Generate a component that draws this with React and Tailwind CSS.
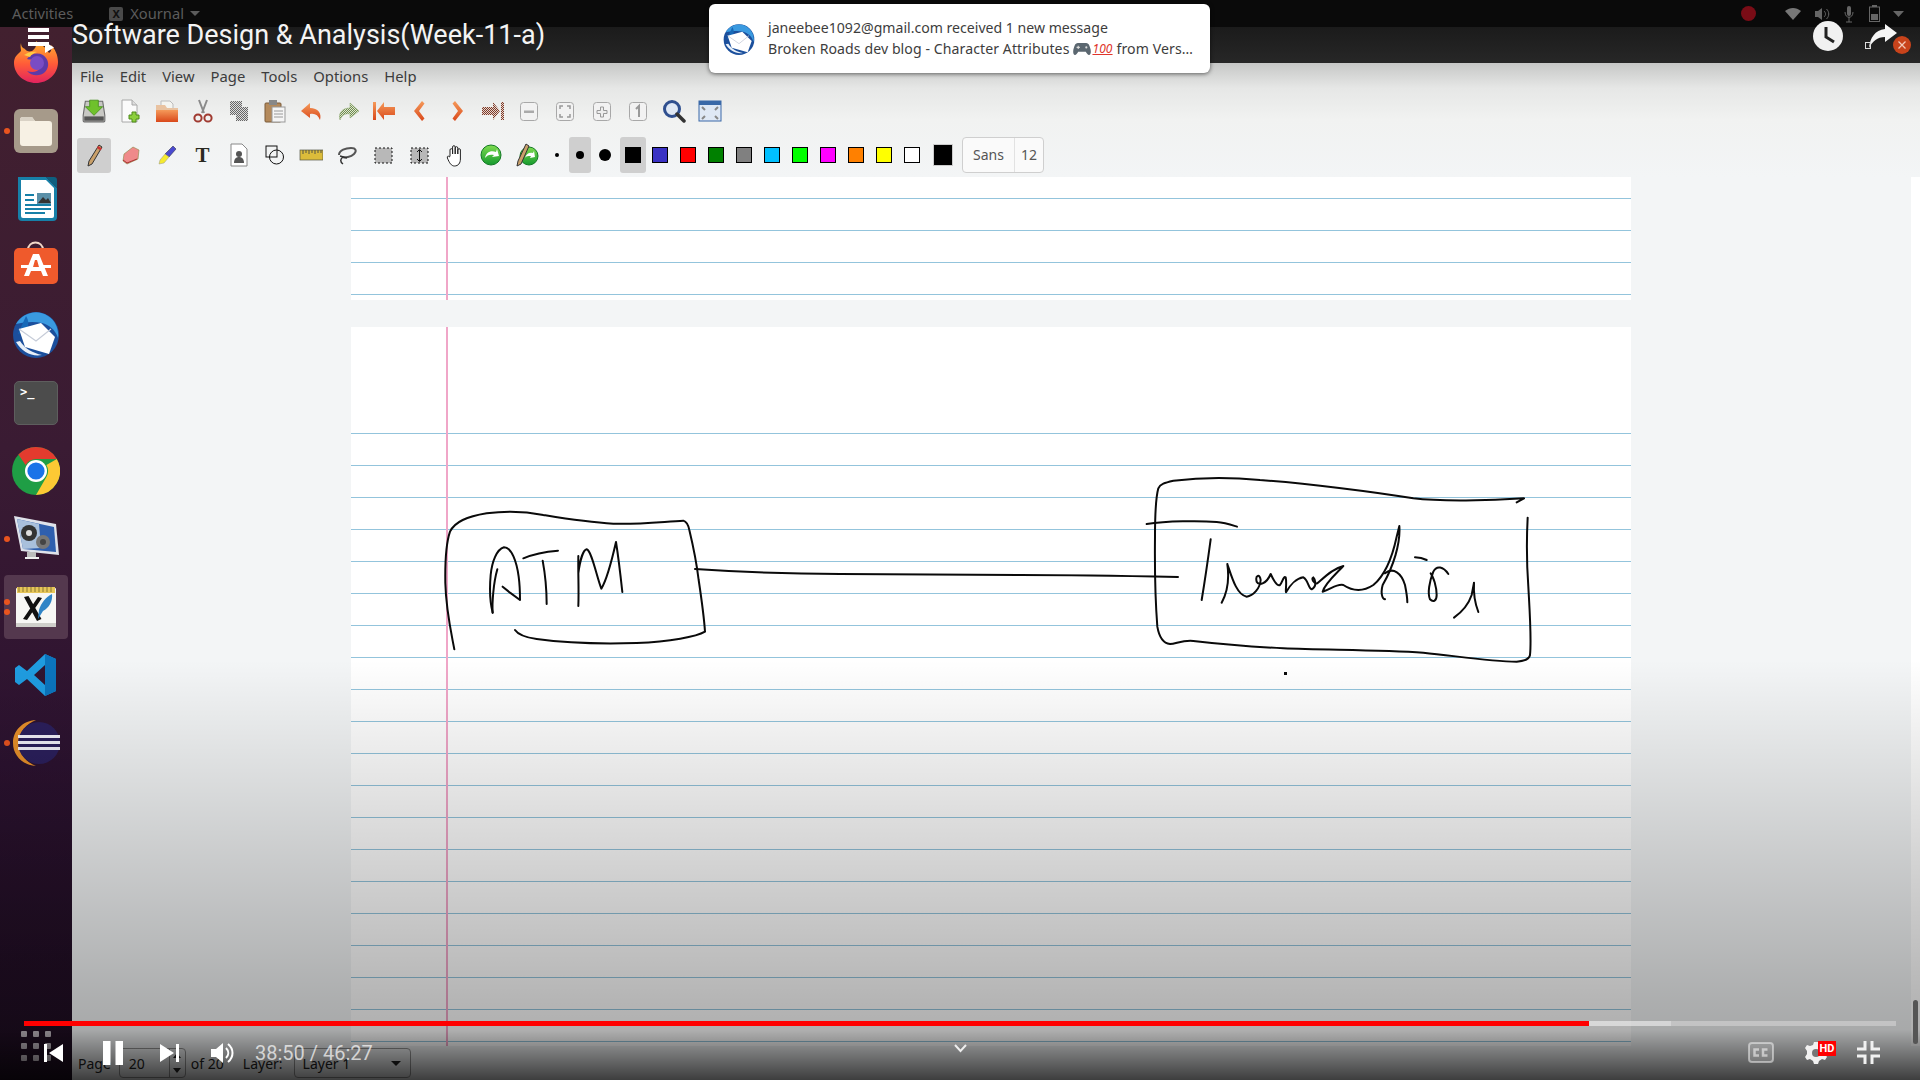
const UI = { fontFamily: '"Noto Sans","Open Sans",sans-serif' };

const Ic = ({ s = 24, vb = 24, children, className = '' }) => (
  <svg width={s} height={s} viewBox={`0 0 ${vb} ${vb}`} className={`shrink-0 ${className}`}>{children}</svg>
);

/* ---------- dock ---------- */
const Firefox = () => (
  <Ic s={46} vb={46} className="-mt-[6px]">
    <defs>
      <linearGradient id="ff" x1="0" y1="0" x2="0" y2="1"><stop offset="0" stopColor="#ffb52e" /><stop offset=".55" stopColor="#ff5b38" /><stop offset="1" stopColor="#e2235f" /></linearGradient>
    </defs>
    <path d="M8 6c-1 3 0 6 0 8C4 18 1 20 1 26c0 11 10 20 22 20s22-9 22-21c0-7-3-13-7-17 1 4 0 7-2 8-3-6-9-9-13-12 1 5-1 8-4 10-3 1-6 0-7-2-3-1-4-3-4-6z" fill="url(#ff)" />
    <path d="M14 22c3-5 10-7 16-4 6 4 7 12 2 17-5 5-14 4-18-1 5 2 11 1 13-3 2-3 0-7-4-8-3-1-7 0-9-1z" fill="#5e3aa8" />
    <circle cx="24" cy="26" r="7" fill="#7a4cc4" />
    <path d="M11 18c4-3 9-4 13-3-4 1-6 3-7 5z" fill="#ffcb45" />
  </Ic>
);
const Files = () => (
  <div className="w-[44px] h-[44px] rounded-[6px] bg-[#a69a8a] flex items-center justify-center">
    <svg width="34" height="30" viewBox="0 0 34 30"><path d="M1 4a3 3 0 013-3h9l3 4h14a3 3 0 013 3v19a3 3 0 01-3 3H4a3 3 0 01-3-3z" fill="#f7f1e4" /><path d="M1 4a3 3 0 013-3h9l3 4H1z" fill="#d9d2c5" /></svg>
  </div>
);
const Writer = () => (
  <Ic s={46} vb={46}>
    <path d="M5 1h28l11 11v29a4 4 0 01-4 4H9a4 4 0 01-4-4z" fill="#1780a8" />
    <path d="M33 1h8a3 3 0 013 3v8z" fill="#0e5f80" />
    <path d="M8 4h25l8 8v28a2 2 0 01-2 2H10a2 2 0 01-2-2z" fill="#fff" />
    <rect x="24" y="17" width="14" height="11" fill="#5b90a8" /><path d="M25 27l5-6 3 3 2-2 3 5z" fill="#333" />
    <g fill="#1780a8"><rect x="12" y="18" width="9" height="2" /><rect x="12" y="23" width="9" height="2" /><rect x="12" y="28" width="26" height="2" /><rect x="12" y="32" width="26" height="2" /><rect x="12" y="36" width="20" height="2" /></g>
  </Ic>
);
const Store = () => (
  <Ic s={46} vb={46} className="-mt-[8px]">
    <path d="M15 10c0-10 15-10 15 0" fill="none" stroke="#f2d8c8" strokeWidth="2" />
    <rect x="1" y="8" width="44" height="36" rx="5" fill="#ef5a2c" />
    <path d="M20 14h6l9 22h-5l-2-5H18l-2 5h-5z" fill="#fff" />
    <rect x="8" y="25" width="30" height="3" fill="#fff" />
    <path d="M22 20h2l2 7h-6z" fill="#ef5a2c" />
  </Ic>
);
const Thunderbird = ({ s = 48, className = '' }) => (
  <Ic s={s} vb={48} className={className}>
    <circle cx="24" cy="25" r="23" fill="#1b4f9c" />
    <path d="M4 14C10 4 24-2 36 6c8 5 11 14 10 22-3-9-9-13-16-15-8-2-18-1-26 1z" fill="#3a9ae0" />
    <path d="M14 6c3 5 3 9 0 14l-8 4z" fill="#1769b8" />
    <path d="M7 19l22-6 14 14-6 17-24-7z" fill="#fff" />
    <path d="M7 19l17 12 15-12" fill="none" stroke="#c6ccd8" strokeWidth="1.2" />
    <path d="M4 32c6 10 16 15 26 13-9-2-17-6-22-14z" fill="#e8f0f8" />
  </Ic>
);
const Terminal = () => (
  <div className="w-[44px] h-[44px] rounded-[5px] bg-[#4c4c4c] border border-[#5e5e5e] relative -mt-[1px]">
    <span className="absolute left-[5px] top-[1px] text-[12px] text-white font-bold" style={{ fontFamily: '"DejaVu Sans Mono",monospace' }}>&gt;_</span>
  </div>
);
const Chrome = () => (
  <Ic s={48} vb={48}>
    <circle cx="24" cy="24" r="24" fill="#1f9e45" />
    <path d="M24 0a24 24 0 0120.8 12H24a12 12 0 00-10.4 6L6.4 7.6A24 24 0 0124 0z" fill="#e33b2e" />
    <path d="M44.8 12A24 24 0 0124 48l10.4-18a12 12 0 000-12z" fill="#fcc934" />
    <circle cx="24" cy="24" r="11" fill="#fff" /><circle cx="24" cy="24" r="8.6" fill="#1a73e8" />
  </Ic>
);
const VideoIcon = () => (
  <Ic s={48} vb={48}>
    <path d="M2 1l42 8 3 31-38-4z" fill="#dfe2ea" />
    <path d="M5 4l37 8 2 25-33-3z" fill="#2f5fae" />
    <path d="M5 4l22 5 2 24-18 1z" fill="#a9c0dc" />
    <circle cx="17" cy="18" r="8" fill="#333" /><circle cx="17" cy="18" r="3" fill="#ddd" />
    <circle cx="31" cy="27" r="7" fill="#777" /><circle cx="31" cy="27" r="3" fill="#444" />
    <rect x="15" y="37" width="9" height="5" fill="#bbb" /><rect x="13" y="42" width="14" height="2" fill="#eee" />
  </Ic>
);
const XournalTile = () => (
  <div className="w-[64px] h-[64px] rounded-[4px] bg-[#54384e] flex items-center justify-center">
    <svg width="40" height="42" viewBox="0 0 40 42">
      <rect x="0" y="2" width="40" height="39" rx="1" fill="#f7f7f4" />
      <rect x="1" y="1" width="38" height="6" fill="#e6c65a" />
      <path d="M3 1v5M7 1v5M11 1v5M15 1v5M19 1v5M23 1v5M27 1v5M31 1v5M35 1v5" stroke="#8a7a30" />
      <rect x="0" y="37" width="40" height="4" fill="#cfcfca" />
      <path d="M8 11l4.500-1 13 23-4.500 2zM22 11l4 1-15 22-4-1z" fill="#111" />
      <path d="M36 8c1 7-3 14-9 17l-5 8 1-9c2-7 7-13 13-16z" fill="#2f84c6" />
    </svg>
  </div>
);
const VSCode = () => (
  <Ic s={44} vb={44}>
    <path d="M31 1l11 5v32l-11 5-18-17-8 6-4-3v-14l4-3 8 6zM31 12l-11 10 11 10z" fill="#1f9ce0" fillRule="evenodd" />
    <path d="M31 1l11 5v32l-11 5z" fill="#0b74bd" />
  </Ic>
);
const Eclipse = () => (
  <Ic s={48} vb={48}>
    <path d="M24 1C10 2 1 12 1 24s9 22 23 23C14 43 7 35 7 24S14 5 24 1z" fill="#e8902a" />
    <circle cx="27" cy="24" r="21" fill="#2b1f5c" />
    <g fill="#f2f0fa"><rect x="6" y="16" width="42" height="3" /><rect x="6" y="22" width="42" height="3" /><rect x="6" y="28" width="42" height="3" /></g>
  </Ic>
);

const dockItems = [
  { c: <Firefox /> }, { c: <Files />, dots: [0] }, { c: <Writer /> }, { c: <Store /> },
  { c: <Thunderbird className="-mt-[3px]" /> }, { c: <Terminal /> }, { c: <Chrome /> }, { c: <VideoIcon />, dots: [0] },
  { c: <XournalTile />, dots: [-5, 5] }, { c: <VSCode /> }, { c: <Eclipse />, dots: [0] },
];

const Dock = () => (
  <aside className="relative w-[72px] shrink-0 flex flex-col pt-[2px] bg-[linear-gradient(to_bottom,#42202f_0%,#3a1b33_40%,#2c1230_70%,#1d0d20_100%)]">
    {dockItems.map((it, i) => (
      <div key={i} className="relative h-[68px] shrink-0 flex items-center justify-center">
        {it.c}
        {(it.dots || []).map((d, j) => (
          <span key={j} className="absolute left-[4px] top-1/2 w-[6px] h-[6px] -mt-[3px] rounded-full bg-[#e9541f]" style={{ transform: `translateY(${d}px)` }} />
        ))}
      </div>
    ))}
    <div className="absolute left-[21px] bottom-[19px] grid grid-cols-3 gap-x-[6px] gap-y-[6px]">
      {Array.from({ length: 9 }).map((_, i) => <span key={i} className="w-[6px] h-[6px] rounded-[1px] bg-[#c4bcc4]" />)}
    </div>
    <div className="absolute left-[28px] top-[1px] flex flex-col gap-[3px]">
      <span className="w-[21px] h-[4px] bg-white" /><span className="w-[21px] h-[4px] bg-white" /><span className="w-[21px] h-[4px] bg-white" />
    </div>
    <svg className="absolute left-[45px] top-[15px]" width="9" height="11" viewBox="0 0 9 11"><path d="M0 0l9 5.500L0 11z" fill="#fff" /></svg>
  </aside>
);

/* ---------- toolbar icons ---------- */
const Chk = 'url(#chk)';
const Defs = () => (
  <svg width="0" height="0" className="absolute">
    <defs>
      <pattern id="chk" width="2" height="2" patternUnits="userSpaceOnUse"><rect width="2" height="2" fill="#ddd" /><rect width="1" height="1" fill="#666" /><rect x="1" y="1" width="1" height="1" fill="#666" /></pattern>
      <pattern id="chkO" width="2" height="2" patternUnits="userSpaceOnUse"><rect width="2" height="2" fill="#e5d7d0" /><rect width="1" height="1" fill="#7f3a28" /><rect x="1" y="1" width="1" height="1" fill="#7f3a28" /></pattern>
      <pattern id="chkG" width="2" height="2" patternUnits="userSpaceOnUse"><rect width="2" height="2" fill="#dfe8d0" /><rect width="1" height="1" fill="#6f8a50" /><rect x="1" y="1" width="1" height="1" fill="#6f8a50" /></pattern>
      <linearGradient id="org" x1="0" y1="0" x2="0" y2="1"><stop offset="0" stopColor="#f59a5a" /><stop offset="1" stopColor="#d9481a" /></linearGradient>
      <linearGradient id="grn" x1="0" y1="0" x2="0" y2="1"><stop offset="0" stopColor="#7fdc4f" /><stop offset="1" stopColor="#149a2e" /></linearGradient>
    </defs>
  </svg>
);
const ZoomBtn = ({ children }) => (
  <Ic>
    <rect x="3.5" y="3.5" width="17" height="18" rx="3" fill="#f2f2f2" stroke="#a8a8a8" />
    {children}
  </Ic>
);
const rowA = [
  <Ic s={26}><path d="M2 16l2-13h16l2 13v5a1 1 0 01-1 1H3a1 1 0 01-1-1z" fill="#c8c8c4" stroke="#6a6a6a" /><rect x="3" y="17" width="18" height="4" fill="#555" /><path d="M8 2h8v6h4l-8 8-8-8h4z" fill="#6fc12c" stroke="#3f8a14" strokeWidth=".7" /></Ic>,
  <Ic><path d="M4 1h10l5 5v17H4z" fill="#fbfbfb" stroke="#a8a8a8" /><path d="M14 1v5h5" fill="#ddd" stroke="#a8a8a8" /><path d="M14 13h4v3h3v4h-3v3h-4v-3h-3v-4h3z" fill="#8ccf3c" stroke="#4f8a1a" /></Ic>,
  <Ic><path d="M6 2h9l3 3v6H6z" fill="#f4f4f0" stroke="#bbb" /><path d="M1 6h9l2 3h11v14H1z" fill="#e9c2a0" /><path d="M1 11h22v12H1z" fill="url(#org)" /></Ic>,
  <Ic><path d="M8 1l5 13M16 1l-5 13" stroke="#8a8a8a" strokeWidth="2" /><circle cx="7" cy="19" r="3.6" fill="none" stroke="#a03a30" strokeWidth="2" /><circle cx="17" cy="19" r="3.6" fill="none" stroke="#a03a30" strokeWidth="2" /></Ic>,
  <Ic><rect x="3" y="2" width="12" height="14" fill={Chk} /><rect x="9" y="8" width="12" height="14" fill={Chk} /></Ic>,
  <Ic><rect x="2" y="4" width="16" height="19" rx="1" fill="#b48a5c" stroke="#7a5a38" /><rect x="6" y="1" width="8" height="5" fill="#888" /><rect x="9" y="8" width="13" height="15" fill="#f5f5f5" stroke="#999" /><path d="M11 12h9M11 15h9M11 18h9" stroke="#999" /></Ic>,
  <Ic><path d="M10 4L1 12l9 7v-4c5-1 8 1 10 6 2-7-2-12-10-12z" fill="url(#org)" /></Ic>,
  <Ic><path d="M14 4l9 8-9 7v-4c-5-1-8 1-10 6-2-7 2-12 10-12z" fill="url(#chkG)" stroke="#88a468" strokeWidth=".5" /></Ic>,
  <Ic><rect x="1" y="3" width="3" height="18" fill="url(#org)" /><path d="M12 3L5 12l7 9v-5h11V8H12z" fill="url(#org)" /></Ic>,
  <Ic><path d="M14 2L6 12l8 10 2.5-2.5L11 12l5.500-7.500z" fill="url(#org)" /></Ic>,
  <Ic><path d="M10 2l8 10-8 10-2.500-2.500L13 12 7.500 4.500z" fill="url(#org)" /></Ic>,
  <Ic><rect x="20" y="3" width="3" height="18" fill="url(#chkO)" /><path d="M12 3l7 9-7 9v-5H1V8h11z" fill="url(#chkO)" /></Ic>,
  <ZoomBtn><rect x="7" y="11.500" width="10" height="2.500" fill="#aaa" /></ZoomBtn>,
  <ZoomBtn><path d="M7 10V7h3M14 7h3v3M7 15v3h3M14 18h3v-3" fill="none" stroke="#999" strokeWidth="1.500" /></ZoomBtn>,
  <ZoomBtn><path d="M10.500 8h3v3.500H17v3h-3.500V18h-3v-3.500H7v-3h3.500z" fill="#eee" stroke="#999" /></ZoomBtn>,
  <ZoomBtn><path d="M10 10l3-3v11" fill="none" stroke="#999" strokeWidth="2" /></ZoomBtn>,
  <Ic><circle cx="10" cy="10" r="7.500" fill="#dfe8f5" stroke="#2f4f8f" strokeWidth="3" /><path d="M15 15l7 7" stroke="#333" strokeWidth="3.500" strokeLinecap="round" /></Ic>,
  <Ic><rect x="1" y="2" width="22" height="20" fill="#dfe8f5" stroke="#3a69a8" /><rect x="1" y="2" width="22" height="4" fill="#3a69a8" /><path d="M4 8l3 3M20 8l-3 3M4 20l3-3M20 20l-3-3" stroke="#888" strokeWidth="2" /></Ic>,
];

const rowB = [
  <Ic><path d="M17 2l3 2-10 17-4 2 1-5z" fill="#c9a06a" stroke="#333" /><path d="M16 3l4 2.500-1.500 2-3.500-2.500z" fill="#c33" /></Ic>,
  <Ic><path d="M5 11L14 4l6 3-1 9-11 5-4-3z" fill="#ef8a8a" stroke="#884" strokeWidth=".6" /><path d="M4 17l4 3 10-4" fill="none" stroke="#a33" /></Ic>,
  <Ic><path d="M18 3l3 3-7 8-4-3z" fill="#4a4ad0" stroke="#223" strokeWidth=".5" /><path d="M10 11l4 3-5 6-5 1 1-4z" fill="#f5ea30" stroke="#998" strokeWidth=".5" /></Ic>,
  <span className="text-[#2a2a22] text-[21px] font-bold leading-none" style={{ fontFamily: '"Liberation Serif",serif' }}>T</span>,
  <Ic><path d="M4 1h11l5 5v17H4z" fill="#fff" stroke="#888" /><circle cx="12" cy="11" r="3" fill="#555" /><path d="M7 20c0-4 2-6 5-6s5 2 5 6z" fill="#555" /></Ic>,
  <Ic><rect x="3" y="3" width="11" height="11" fill="none" stroke="#111" /><circle cx="13.500" cy="14" r="7" fill="none" stroke="#111" /></Ic>,
  <Ic><rect x="1" y="7" width="23" height="10" fill="#dcbc3a" stroke="#554" strokeWidth=".7" /><path d="M4 7v4M7 7v3M10 7v4M13 7v3M16 7v4M19 7v3M22 7v3" stroke="#554" /></Ic>,
  <Ic><path d="M4 12c0-5 7-7 12-7s6 3 3 6-9 4-12 3" fill="none" stroke="#555" strokeWidth="2" /><path d="M8 14c-3 2-3 5 0 7M5 13l7 2" fill="none" stroke="#333" strokeWidth="1.500" /></Ic>,
  <Ic><rect x="4" y="5" width="17" height="15" fill="#b8b8b8" stroke="#111" strokeDasharray="2 2" /></Ic>,
  <Ic><rect x="4" y="5" width="17" height="15" fill="#b8b8b8" stroke="#111" strokeDasharray="2 2" /><path d="M12.500 7v11M10 9l2.500-2.500L15 9M10 16l2.500 2.500L15 16" fill="none" stroke="#111" /></Ic>,
  <Ic><path d="M7 13V7a1.300 1.300 0 012.600 0v4-7a1.300 1.300 0 012.600 0v7-6a1.300 1.300 0 012.600 0v6-4a1.300 1.300 0 012.600 0v9c0 4-2 7-6 7-3 0-5-3-7-8-.5-2 1-2.500 2-1z" fill="#fff" stroke="#222" strokeWidth="1" /></Ic>,
  <Ic><circle cx="12" cy="12" r="10" fill="url(#grn)" stroke="#137a24" /><path d="M6 15c1-5 5-8 11-6l1-3 2 7-7 1 2-2c-4-1-7 0-9 3z" fill="#fff" /></Ic>,
  <Ic><circle cx="14" cy="13" r="9" fill="url(#grn)" stroke="#137a24" /><path d="M10 15c1-4 4-6 8-5l1-2 1 6-5 1 1-2c-3 0-5 0-6 2z" fill="#fff" /><path d="M11 1l3 2L6 21l-4 2 1-5z" fill="#c9a06a" stroke="#333" /></Ic>,
];
const colors = ['#3a32c4', '#ff0000', '#008000', '#808080', '#00c0ff', '#00ff00', '#ff00ff', '#ff8000', '#ffff00', '#ffffff'];

const Toolbars = () => (
  <div className="shrink-0 bg-[linear-gradient(to_bottom,#c6c7c6_0%,#e6e7e6_22%,#f1f2f1_50%,#f3f5f6_100%)] text-[#3c3c3c]" style={UI}>
    <nav className="h-[26px] flex items-center gap-[16px] pl-[8px] text-[14.800px]">
      {['File', 'Edit', 'View', 'Page', 'Tools', 'Options', 'Help'].map((m) => <span key={m}>{m}</span>)}
    </nav>
    <div className="h-[44px] flex items-center pl-[10px] gap-[12.250px]">
      {rowA.map((c, i) => <span key={i} className="w-[24px] h-[26px] flex items-center justify-center">{c}</span>)}
    </div>
    <div className="h-[44px] flex items-center pl-[5px]">
      <div className="flex items-center gap-[1px]">
        {rowB.map((c, i) => (
          <span key={i} className={`h-[35px] flex items-center justify-center ${i === 0 ? 'w-[34px] rounded-[3px] bg-[#cfcfcf] mr-[1px]' : 'w-[35px]'}`}>{c}</span>
        ))}
      </div>
      <span className="w-[24px] h-[35px] ml-[1px] flex items-center justify-center"><span className="w-[4px] h-[4px] rounded-full bg-black" /></span>
      <span className="w-[22px] h-[36px] rounded-[3px] bg-[#cfcfcf] flex items-center justify-center"><span className="w-[8px] h-[8px] rounded-full bg-black" /></span>
      <span className="w-[24px] h-[35px] ml-[2px] flex items-center justify-center"><span className="w-[12px] h-[12px] rounded-full bg-black" /></span>
      <span className="w-[26px] h-[36px] ml-[3px] rounded-[3px] bg-[#cfcfcf] flex items-center justify-center"><span className="w-[16px] h-[16px] bg-black" /></span>
      <div className="flex items-center gap-[12px] ml-[6px]">
        {colors.map((c) => <span key={c} className="w-[16px] h-[16px] border border-black" style={{ background: c }} />)}
      </div>
      <span className="w-[20px] h-[22px] ml-[13px] bg-black border border-[#ccc]" />
      <div className="ml-[9px] w-[82px] h-[36px] rounded-[4px] border border-[#cfcfcf] bg-[#fafafa] flex items-center text-[14px] text-[#555] -mt-[1px]">
        <span className="flex-1 text-center">Sans</span>
        <span className="w-[29px] h-full border-l border-[#e2e2e2] flex items-center justify-center">12</span>
      </div>
    </div>
  </div>
);

/* ---------- pages ---------- */
const Rule = ({ n }) => Array.from({ length: n }).map((_, i) => (
  <div key={i} className="h-[32px] shrink-0 border-b-[1.500px] border-[#93c4dc]" />
));

const Ink = () => (
  <svg className="absolute left-0 top-0" width="1280" height="719" viewBox="351 327 1280 719" fill="none" stroke="#0a0a0a" strokeLinecap="round" strokeLinejoin="round">
    <g transform="translate(430 490) scale(.33333)" strokeWidth="6">
      <path d="M73 478C62 420 48 360 46 280C45 220 48 160 60 125C75 95 110 80 170 70C230 62 290 65 340 75C400 85 470 97 550 101C620 104 700 95 760 92C770 95 775 105 778 120C790 170 800 220 806 270C815 330 822 380 825 425C800 440 720 455 620 459C520 462 400 458 320 447C285 442 265 435 255 420" />
      <path d="M188 368C182 345 178 300 182 255C186 215 200 178 222 172C245 172 260 215 266 260C270 290 270 310 270 330L240 308L218 290" />
      <path d="M188 368C186 340 190 280 202 238" />
      <path d="M280 205C310 192 345 185 384 182M338 212C345 250 350 300 350 342" />
      <path d="M445 348C447 300 444 250 445 198M445 250C450 210 460 180 470 178C485 182 500 260 514 296C530 270 548 200 558 156C565 200 572 260 577 306" />
    </g>
    <path d="M695 569C740 572 790 574 840 574C900 574 960 575 1020 575C1080 575 1130 576 1178 577" strokeWidth="2" />
    <g transform="translate(1140 470) scale(.33333)" strokeWidth="6">
      <path d="M1130 97L1152 85C1050 92 900 95 820 85C700 65 500 40 360 30C280 22 180 22 100 32C75 38 60 42 55 55C48 80 45 130 45 200C44 290 45 380 52 470C58 505 70 520 90 522C110 520 130 510 160 513C220 520 330 530 430 535C550 540 720 540 850 548C950 558 1050 575 1130 575C1155 573 1168 568 1170 555C1175 510 1170 440 1165 350C1160 280 1160 200 1163 143" />
      <path d="M20 162C80 153 180 152 230 156C255 158 275 165 291 170" />
      <path d="M212 208C205 260 195 330 185 390" />
      <path d="M245 398C255 380 270 340 262 282C275 320 290 375 320 380C340 378 360 355 362 330C360 310 345 315 350 335C358 350 380 340 392 312C398 325 410 350 420 345C428 335 430 318 437 322C441 340 436 360 438 367C450 345 470 325 490 322C505 330 505 355 515 358C530 350 528 330 520 322C512 325 522 342 532 340C555 320 580 295 610 288C590 310 555 340 548 365C570 360 590 340 610 345C640 365 670 365 700 345C730 320 755 270 770 200L778 168C782 220 760 290 728 345C722 365 725 385 735 388" />
      <path d="M735 310C760 290 785 310 795 345C800 370 802 385 802 397" />
      <path d="M825 262C840 262 850 265 860 270" />
      <path d="M925 312C910 290 890 285 880 305C868 335 862 370 870 388C880 398 890 392 890 375C890 350 880 320 872 310" />
      <path d="M942 443C960 430 985 405 995 375L1002 338C1000 370 1005 400 1015 426" />
    </g>
    <rect x="1284" y="672" width="3" height="3" fill="#0a0a0a" stroke="none" />
  </svg>
);

const Canvas = () => (
  <div className="flex-1 min-h-0 overflow-hidden bg-[#f3f5f6] relative flex flex-col items-start pl-[279px]">
    <div className="relative w-[1280px] h-[123px] shrink-0 bg-white flex flex-col overflow-hidden">
      <div className="-mt-[10px] flex flex-col"><Rule n={4} /></div>
      <div className="absolute left-[95px] top-0 bottom-0 w-[2px] bg-[#f0a6c8]" />
    </div>
    <div className="relative w-[1280px] mt-[27px] shrink-0 bg-white flex flex-col pt-[75px] h-[760px]">
      <Rule n={20} />
      <div className="absolute left-[95px] top-0 bottom-0 w-[2px] bg-[#f0a6c8]" />
      <Ink />
    </div>
    <div className="absolute right-0 top-0 bottom-0 w-[9px] bg-white" />
  </div>
);

const StatusBar = () => (
  <div className="h-[34px] shrink-0 bg-[#f3f5f6] flex items-center text-[14px] text-[#222] pl-[6px]" style={UI}>
    <span>Page</span>
    <div className="ml-[8px] w-[67px] h-[30px] rounded-[4px] border border-[#999] flex items-center relative">
      <span className="pl-[9px]">20</span>
      <span className="absolute right-0 top-0 bottom-0 w-[16px] border-l border-[#999] flex flex-col items-center justify-between py-[4px]">
        <span className="w-0 h-0 border-x-[4px] border-x-transparent border-b-[5px] border-b-[#222]" />
        <span className="w-0 h-0 border-x-[4px] border-x-transparent border-t-[5px] border-t-[#222]" />
      </span>
    </div>
    <span className="ml-[5px]">of 20</span>
    <span className="ml-[19px]">Layer:</span>
    <div className="ml-[11px] w-[117px] h-[30px] rounded-[4px] border border-[#999] flex items-center justify-between pl-[8px] pr-[9px]">
      <span>Layer 1</span>
      <span className="w-0 h-0 border-x-[5px] border-x-transparent border-t-[5px] border-t-[#222]" />
    </div>
  </div>
);

/* ---------- overlays ---------- */
const Notification = () => (
  <div className="absolute left-[709px] top-[4px] w-[501px] h-[69px] rounded-[6px] bg-white shadow-[0_1px_4px_rgba(0,0,0,0.55)] flex items-center text-[#3d3d3d] text-[14.100px]" style={UI}>
    <span className="ml-[14px] mr-[13px]"><Thunderbird s={32} /></span>
    <div className="flex flex-col leading-[21px] whitespace-nowrap -mt-[1px]">
      <span>janeebee1092@gmail.com received 1 new message</span>
      <span className="flex items-center gap-[3px] tracking-[0.08px]">Broken Roads dev blog - Character Attributes
        <svg className="ml-[1px]" width="18" height="14" viewBox="0 0 16 13"><path d="M4 1h8c2 0 3 2 4 6 .5 3 0 5-1.500 5-1 0-2-1.500-3-3H4.500c-1 1.500-2 3-3 3C0 12-.5 10 0 7c1-4 2-6 4-6z" fill="#5b6770" /><circle cx="12" cy="5" r="1" fill="#ddd" /><path d="M3 5h3M4.500 3.500v3" stroke="#ddd" /></svg>
        <span className="text-[#e0352b] text-[12px] italic underline -ml-[2px]">100</span>
        <span className="ml-[1px]">from Vers…</span></span>
    </div>
  </div>
);

const TrayRight = () => (
  <div className="absolute right-0 top-0 h-[27px] w-[190px] flex items-center">
    <span className="ml-[11px] w-[15px] h-[15px] rounded-full bg-[#7a0c16]" />
    <svg className="ml-[29px]" width="16" height="12" viewBox="0 0 16 12"><path d="M0 3c5-4 11-4 16 0l-8 9z" fill="#777" /></svg>
    <svg className="ml-[14px]" width="15" height="14" viewBox="0 0 15 14"><path d="M0 4h3l4-3v12L3 10H0z" fill="#666" /><path d="M9 4c2 2 2 4 0 6M11.500 2c3 3 3 7 0 10" fill="none" stroke="#666" /></svg>
    <svg className="ml-[14px]" width="10" height="18" viewBox="0 0 10 18"><rect x="3" y="1" width="4" height="10" rx="2" fill="#666" /><path d="M1 7c0 7 8 7 8 0M5 12v5M2 17h6" fill="none" stroke="#666" /></svg>
    <svg className="ml-[15px]" width="11" height="17" viewBox="0 0 11 17"><rect x=".5" y="2" width="10" height="14.500" fill="none" stroke="#666" /><rect x="3" y="0" width="5" height="2" fill="#666" /><rect x="2" y="9" width="7" height="6" fill="#666" /></svg>
    <svg className="ml-[13px]" width="11" height="6" viewBox="0 0 11 6"><path d="M0 0h11L5.500 6z" fill="#666" /></svg>
  </div>
);

const TitleRight = () => (
  <>
    <svg className="absolute left-[1813px] top-[21px]" width="30" height="30" viewBox="0 0 30 30"><circle cx="15" cy="15" r="15" fill="#f1f1f1" /><path d="M13 6v10l8 5" fill="none" stroke="#222" strokeWidth="3" /></svg>
    <svg className="absolute left-[1865px] top-[24px]" width="32" height="26" viewBox="0 0 32 26"><path d="M20 0l12 9-12 9v-5C12 13 8 17 4 24 5 14 10 6 20 5z" fill="#f6f6f6" /><rect x=".5" y="18.500" width="5" height="6" fill="none" stroke="#ddd" /></svg>
    <svg className="absolute left-[1893px] top-[36px]" width="18" height="18" viewBox="0 0 18 18"><circle cx="9" cy="9" r="9" fill="#c8431b" /><path d="M5.500 5.500l7 7M12.500 5.500l-7 7" stroke="#f2c9b8" strokeWidth="1.300" /></svg>
  </>
);

const Player = () => (
  <>
    <div className="absolute left-0 right-0 top-[660px] bottom-0 bg-[linear-gradient(to_bottom,transparent_0%,rgba(0,0,0,0.29)_81%,rgba(0,0,0,0.31)_88%,rgba(0,0,0,0.75)_100%)]" />
    <div className="absolute left-[24px] w-[1872px] top-[1021px] h-[5px] bg-white/30">
      <div className="absolute left-0 top-0 bottom-0 w-[1647px] bg-white/30" />
      <div className="absolute left-0 top-0 bottom-0 w-[1565px] bg-[#ff0000]" />
    </div>
    <div className="absolute right-[2px] top-[1000px] w-[5px] h-[44px] rounded-full bg-[#555]" />
    <div className="absolute left-0 right-0 top-[1036px] h-[36px] text-white">
      <svg className="absolute left-[44px] top-[8px]" width="19" height="18" viewBox="0 0 19 18"><rect width="3" height="18" fill="#fff" /><path d="M19 0v18L5 9z" fill="#fff" /></svg>
      <svg className="absolute left-[103px] top-[5px]" width="20" height="24" viewBox="0 0 20 24"><rect width="7.500" height="24" fill="#fff" /><rect x="12.500" width="7.500" height="24" fill="#fff" /></svg>
      <svg className="absolute left-[160px] top-[8px]" width="19" height="18" viewBox="0 0 19 18"><path d="M0 0v18L14 9z" fill="#fff" /><rect x="16" width="3" height="18" fill="#fff" /></svg>
      <svg className="absolute left-[211px] top-[6px]" width="23" height="22" viewBox="0 0 23 22"><path d="M0 7h5l7-6v20l-7-6H0z" fill="#fff" /><path d="M15 6c3 3 3 7 0 10M17 2c6 5 6 13 0 18" fill="none" stroke="#fff" strokeWidth="2" /></svg>
      <span className="absolute left-[255px] top-[5px] text-[20px] leading-[24px] text-white/70 whitespace-nowrap" style={{ fontFamily: 'Roboto,sans-serif' }}>38:50 / 46:27</span>
      <svg className="absolute left-[954px] top-[8px]" width="13" height="9" viewBox="0 0 13 9"><path d="M1 1l5.500 6L12 1" fill="none" stroke="#eee" strokeWidth="2" /></svg>
      <svg className="absolute left-[1748px] top-[6px]" width="26" height="21" viewBox="0 0 26 21"><rect x="1" y="1" width="24" height="19" rx="3" fill="#ffffff22" stroke="#ffffff77" strokeWidth="2" /><path d="M11 7.500H6.500v6H11M19.500 7.500H15v6h4.500" fill="none" stroke="#ffffff88" strokeWidth="2.500" /></svg>
      <svg className="absolute left-[1804px] top-[5px]" width="24" height="24" viewBox="0 0 24 24"><path d="M10 1h4l1 3 3 1 3-1 2 3-2 3v3l2 3-2 3-3-1-3 2-1 3h-4l-1-3-3-2-3 1-2-3 2-3v-3L1 7l2-3 3 1 3-1z" fill="#f1f1f1" /><circle cx="12" cy="12" r="4" fill="#777" /></svg>
      <span className="absolute left-[1818px] top-[5px] w-[18px] h-[15px] bg-[#ff0000] text-white text-[11px] leading-[15px] text-center font-bold" style={{ fontFamily: 'Roboto,sans-serif' }}>HD</span>
      <svg className="absolute left-[1857px] top-[5px]" width="23" height="23" viewBox="0 0 23 23"><path d="M8 0v8H0M15 0v8h8M8 23v-8H0M15 23v-8h8" fill="none" stroke="#f1f1f1" strokeWidth="3" /></svg>
    </div>
  </>
);

export default function App() {
  return (
    <div className="relative w-[1920px] h-[1080px] overflow-hidden flex flex-col bg-black">
      <Defs />
      <header className="h-[27px] shrink-0 bg-[#0a0a0a] flex items-center text-[14.700px] text-[#5c5c5c] relative" style={UI}>
        <span className="ml-[12px]">Activities</span>
        <span className="ml-[36px] w-[14px] h-[14px] rounded-[2px] bg-[#4a4a4a] text-[#111] text-[11px] leading-[14px] text-center font-bold">X</span>
        <span className="ml-[7px]">Xournal</span>
        <span className="ml-[6px] w-0 h-0 border-x-[5px] border-x-transparent border-t-[5px] border-t-[#5c5c5c]" />
      </header>
      <div className="flex-1 min-h-0 flex">
        <Dock />
        <main className="flex-1 min-w-0 flex flex-col">
          <div className="h-[36px] shrink-0 bg-[linear-gradient(to_bottom,#1b1b1b,#272727)] flex items-center">
            <h1 className="text-[27px] text-[#f4f4f4] font-normal whitespace-nowrap leading-none -mt-[20px] relative z-10" style={{ fontFamily: 'Roboto,sans-serif' }}>Software Design &amp; Analysis(Week-11-a)</h1>
          </div>
          <Toolbars />
          <Canvas />
          <StatusBar />
        </main>
      </div>
      <Player />
      <TrayRight />
      <TitleRight />
      <Notification />
    </div>
  );
}
